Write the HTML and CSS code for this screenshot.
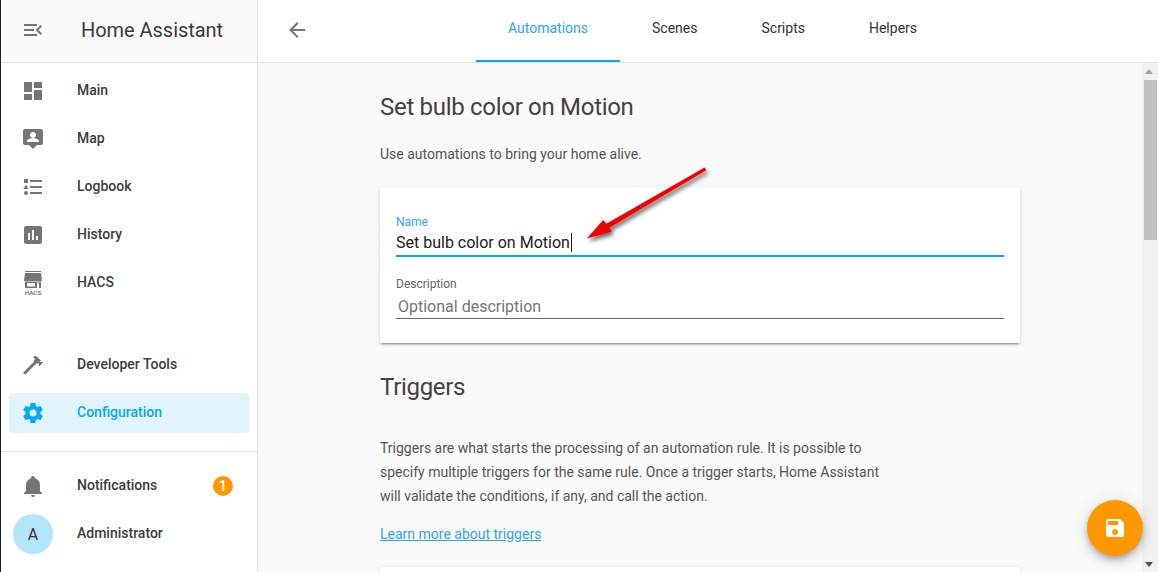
FILE: index.html
```html
<!DOCTYPE html>
<html lang="en">
<head>
<meta charset="utf-8">
<title>Home Assistant</title>
<link rel="stylesheet" href="styles.css">
</head>
<body>
<div class="app">
  <aside class="sidebar">
    <div class="side-head">
      <svg class="icon" viewBox="0 0 24 24"><path d="M21,15.61L19.59,17L14.58,12L19.59,7L21,8.39L17.44,12L21,15.61M3,6H16V8H3V6M3,13V11H13V13H3M3,18V16H16V18H3Z"/></svg>
      <span class="side-title">Home Assistant</span>
    </div>
    <nav class="side-list">
      <a class="item"><svg class="icon" viewBox="0 0 24 24"><path d="M13,3V9H21V3M13,21H21V11H13M3,21H11V15H3M3,13H11V3H3V13Z"/></svg><span>Main</span></a>
      <a class="item"><svg class="icon" viewBox="0 0 24 24"><path d="M20 2H4C2.9 2 2 2.9 2 4V16C2 17.1 2.9 18 4 18H8L12 22L16 18H20C21.1 18 22 17.1 22 16V4C22 2.9 21.1 2 20 2M12 5C13.66 5 15 6.34 15 8S13.66 11 12 11 9 9.66 9 8 10.34 5 12 5M18 15H6V14C6 12 10 10.9 12 10.9S18 12 18 14V15Z"/></svg><span>Map</span></a>
      <a class="item"><svg class="icon" viewBox="0 0 24 24"><path d="M5,9.5L7.5,14H2.5L5,9.5M3,4H7V8H3V4M5,20A2,2 0 0,0 7,18A2,2 0 0,0 5,16A2,2 0 0,0 3,18A2,2 0 0,0 5,20M9,5V7H21V5H9M9,19H21V17H9V19M9,13H21V11H9V13Z"/></svg><span>Logbook</span></a>
      <a class="item"><svg class="icon" viewBox="0 0 24 24"><path d="M19 3H5C3.9 3 3 3.9 3 5V19C3 20.1 3.9 21 5 21H19C20.1 21 21 20.1 21 19V5C21 3.9 20.1 3 19 3M9 17H7V10H9V17M13 17H11V7H13V17M17 17H15V13H17V17Z"/></svg><span>History</span></a>
      <a class="item"><svg class="icon hacs" viewBox="0 0 24 24"><path d="M4 0H20V1H4ZM4 2H20L21 10H3ZM4 10.5H20V17H18V11.5H16V17H4ZM6 12V15.5H14V12Z"/><text class="hacs-mark" x="12" y="23.8" text-anchor="middle">HACS</text></svg><span>HACS</span></a>
      <div class="side-spacer"></div>
      <a class="item"><svg class="icon" viewBox="0 0 24 24"><path d="M2 19.63L13.43 8.2L12.72 7.5L14.14 6.07L12 3.89C13.2 2.7 15.09 2.7 16.27 3.89L19.87 7.5L18.45 8.91H21.29L22 9.62L18.45 13.21L17.74 12.5V9.62L16.27 11.04L15.56 10.33L4.13 21.76L2 19.63Z"/></svg><span>Developer Tools</span></a>
      <a class="item active"><svg class="icon" viewBox="0 0 24 24"><path d="M12,15.5A3.5,3.5 0 0,1 8.5,12A3.5,3.5 0 0,1 12,8.5A3.5,3.5 0 0,1 15.5,12A3.5,3.5 0 0,1 12,15.5M19.43,12.97C19.47,12.65 19.5,12.33 19.5,12C19.5,11.67 19.47,11.34 19.43,11L21.54,9.37C21.73,9.22 21.78,8.95 21.66,8.73L19.66,5.27C19.54,5.05 19.27,4.96 19.05,5.05L16.56,6.05C16.04,5.66 15.5,5.32 14.87,5.07L14.5,2.42C14.46,2.18 14.25,2 14,2H10C9.75,2 9.54,2.18 9.5,2.42L9.13,5.07C8.5,5.32 7.96,5.66 7.44,6.05L4.95,5.05C4.73,4.96 4.46,5.05 4.34,5.27L2.34,8.73C2.21,8.95 2.27,9.22 2.46,9.37L4.57,11C4.53,11.34 4.5,11.67 4.5,12C4.5,12.33 4.53,12.65 4.57,12.97L2.46,14.63C2.27,14.78 2.21,15.05 2.34,15.27L4.34,18.73C4.46,18.95 4.73,19.03 4.95,18.95L7.44,17.94C7.96,18.34 8.5,18.68 9.13,18.93L9.5,21.58C9.54,21.82 9.75,22 10,22H14C14.25,22 14.46,21.82 14.5,21.58L14.87,18.93C15.5,18.67 16.04,18.34 16.56,17.94L19.05,18.95C19.27,19.03 19.54,18.95 19.66,18.73L21.66,15.27C21.78,15.05 21.73,14.78 21.54,14.63L19.43,12.97Z"/></svg><span>Configuration</span></a>
    </nav>
    <div class="side-foot">
      <a class="item"><svg class="icon" viewBox="0 0 24 24"><path d="M21,19V20H3V19L5,17V11C5,7.9 7.03,5.17 10,4.29C10,4.19 10,4.1 10,4A2,2 0 0,1 12,2A2,2 0 0,1 14,4C14,4.1 14,4.19 14,4.29C16.97,5.17 19,7.9 19,11V17L21,19M14,21A2,2 0 0,1 12,23A2,2 0 0,1 10,21"/></svg><span>Notifications</span><b class="badge">1</b></a>
      <a class="item user"><span class="avatar">A</span><span>Administrator</span></a>
    </div>
  </aside>
  <main class="main">
    <header class="topbar">
      <svg class="icon back" viewBox="0 0 24 24"><path d="M20,11V13H8L13.5,18.5L12.08,19.92L4.16,12L12.08,4.08L13.5,5.5L8,11H20Z"/></svg>
      <div class="tabs">
        <a class="tab current">Automations</a>
        <a class="tab">Scenes</a>
        <a class="tab">Scripts</a>
        <a class="tab">Helpers</a>
      </div>
    </header>
    <div class="body-row">
      <div class="content">
        <div class="column">
          <h1 class="title">Set bulb color on Motion</h1>
          <p class="intro">Use automations to bring your home alive.</p>
          <section class="card">
            <div class="field focused">
              <div class="field-label">Name</div>
              <div class="field-value">Set bulb color on Motion<i class="caret"></i></div>
            </div>
            <div class="field">
              <div class="field-label">Description</div>
              <div class="field-value placeholder">Optional description</div>
            </div>
          </section>
          <h2 class="title second">Triggers</h2>
          <p class="copy">Triggers are what starts the processing of an automation rule. It is possible to specify multiple triggers for the same rule. Once a trigger starts, Home Assistant will validate the conditions, if any, and call the action.</p>
          <a class="learn">Learn more about triggers</a>
          <section class="card next"></section>
        </div>
      </div>
      <div class="scrollbar">
        <span class="sb-up"></span>
        <span class="sb-thumb"></span>
        <span class="sb-down"></span>
      </div>
    </div>
  </main>
</div>
<svg class="callout" viewBox="0 0 130 84" aria-hidden="true">
  <defs><filter id="soft" x="-20%" y="-20%" width="150%" height="160%"><feDropShadow dx="2" dy="3" stdDeviation="2" flood-color="#000" flood-opacity=".6"/></filter></defs>
  <path d="M120.6 3.6 122.4 6.2 25.4 63.8 27.7 67.7 2.8 74.4 19.3 56 22.3 59.8Z" fill="#f40000" filter="url(#soft)"/>
</svg>
<button class="fab"><svg viewBox="0 0 24 24"><path d="M15,9H5V5H15M12,19A3,3 0 0,1 9,16A3,3 0 0,1 12,13A3,3 0 0,1 15,16A3,3 0 0,1 12,19M17,3H5C3.89,3 3,3.9 3,5V19A2,2 0 0,0 5,21H19A2,2 0 0,0 21,19V7L17,3Z"/></svg></button>
</body>
</html>
```
FILE: styles.css
```css
* { box-sizing: border-box; }
html, body { margin: 0; height: 100%; overflow: hidden; }
body { font-family: Roboto, sans-serif; color: #212121; background: #fafafa; }
.app { display: flex; height: 572px; }
.icon { width: 24px; height: 24px; fill: #757575; flex: none; }
.icon.hacs { overflow: visible; }

.sidebar { width: 258px; flex: none; display: flex; flex-direction: column; background: #fff; border-left: 1px solid #202020; border-right: 1px solid #e0e0e0; }
.side-head { height: 63px; flex: none; display: flex; align-items: center; gap: 36px; padding: 0 0 2px 20px; background: #fafafa; border-bottom: 1px solid #e0e0e0; }
.side-title { font-size: 20px; color: #3a3a3a; letter-spacing: -0.04px; }
.side-list { display: flex; flex-direction: column; flex: none; height: 389px; padding-top: 4px; border-bottom: 1px solid #e0e0e0; }
.side-spacer { height: 34px; flex: none; }
.side-foot { display: flex; flex-direction: column; padding-top: 10px; }
.item { position: relative; height: 40px; margin: 4px 8px; padding-left: 12px; display: flex; align-items: center; gap: 32px; border-radius: 4px; font-size: 14px; font-weight: 500; color: #3c3c3c; }
.item > span:last-of-type { margin-bottom: 2px; }
.item.active { background: #e1f4fe; color: #03a9f4; }
.item.active .icon { fill: #03a9f4; }
.item.user { padding-left: 4px; gap: 24px; }
.hacs-mark { font: 500 6.2px Roboto, sans-serif; fill: #666; }
.badge { position: absolute; left: 204px; top: 10px; width: 20px; height: 20px; border-radius: 50%; background: #ff9800; color: #fff; font-size: 14px; font-weight: 500; display: flex; align-items: center; justify-content: center; }
.avatar { width: 40px; height: 40px; flex: none; border-radius: 50%; background: #b3e5fc; color: #333; font-size: 16px; font-weight: 400; display: flex; align-items: center; justify-content: center; }

.main { flex: 1; min-width: 0; display: flex; flex-direction: column; }
.topbar { height: 63px; flex: none; display: flex; background: #fff; border-bottom: 1px solid #e0e0e0; padding-left: 27px; }
.back { margin-top: 18px; }
.tabs { display: flex; margin-left: 167px; }
.tab { height: 62px; padding: 20px 32px 0; font-size: 14px; color: #333; }
.tab.current { color: #2ea6f5; border-bottom: 2px solid #03a9f4; }

.body-row { flex: 1; min-height: 0; display: flex; }
.content { flex: 1; min-width: 0; overflow: hidden; display: flex; justify-content: center; }
.column { width: 640px; flex: none; }
.title { margin: 0; font-size: 24px; font-weight: 400; line-height: 32px; color: #424242; padding-top: 28px; letter-spacing: -0.3px; }
.intro { margin: 0; padding-top: 19px; font-size: 14px; line-height: 24px; color: #555; }
.card { background: #fff; border-radius: 2px; box-shadow: 0 2px 2px rgba(0,0,0,.14), 0 1px 5px rgba(0,0,0,.12), 0 3px 1px -2px rgba(0,0,0,.2); }
.card:first-of-type { margin-top: 21px; height: 156px; padding: 27px 16px 0; }
.card.next { margin-top: 21px; height: 40px; }
.field { height: 43px; border-bottom: 1px solid #666; margin-bottom: 19px; }
.field.focused { border-bottom: 2px solid #03a9f4; }
.field-label { font-size: 12px; line-height: 16px; color: #666; }
.focused .field-label { color: #2ea6f5; }
.field-value { font-size: 16px; line-height: 24px; color: #212121; position: relative; padding-top: 1px; }
.placeholder { color: #757575; padding-left: 2px; padding-top: 3px; }
.caret { display: inline-block; width: 1px; height: 19px; margin-left: 1px; background: #212121; vertical-align: -4px; }
.second { padding-top: 28px; }
.copy { margin: 0; padding-top: 33px; width: 510px; font-size: 14px; line-height: 24px; color: #555; }
.learn { display: block; margin-top: 14px; font-size: 14px; line-height: 24px; color: #2ea6f5; text-decoration: underline; }

.scrollbar { width: 16px; flex: none; background: #f1f1f1; display: flex; flex-direction: column; align-items: flex-end; position: relative; }
.sb-up, .sb-down { position: absolute; left: 3px; width: 0; height: 0; border-left: 4px solid transparent; border-right: 4px solid transparent; }
.sb-up { top: 6px; border-bottom: 5px solid #a3a3a3; }
.sb-down { bottom: 5px; border-top: 5px solid #505050; }
.sb-thumb { position: absolute; top: 17px; left: 2px; width: 13px; height: 160px; background: #c1c1c1; }

.callout { position: absolute; left: 584px; top: 164px; width: 130px; height: 84px; }
.fab { position: absolute; left: 1087px; top: 500px; width: 56px; height: 56px; padding: 0; border: 0; border-radius: 50%; background: #ff9800; display: flex; align-items: center; justify-content: center; box-shadow: 0 6px 10px rgba(0,0,0,.14), 0 1px 18px rgba(0,0,0,.12), 0 3px 5px -1px rgba(0,0,0,.2); }
.fab svg { width: 24px; height: 24px; fill: #fff; }
```
